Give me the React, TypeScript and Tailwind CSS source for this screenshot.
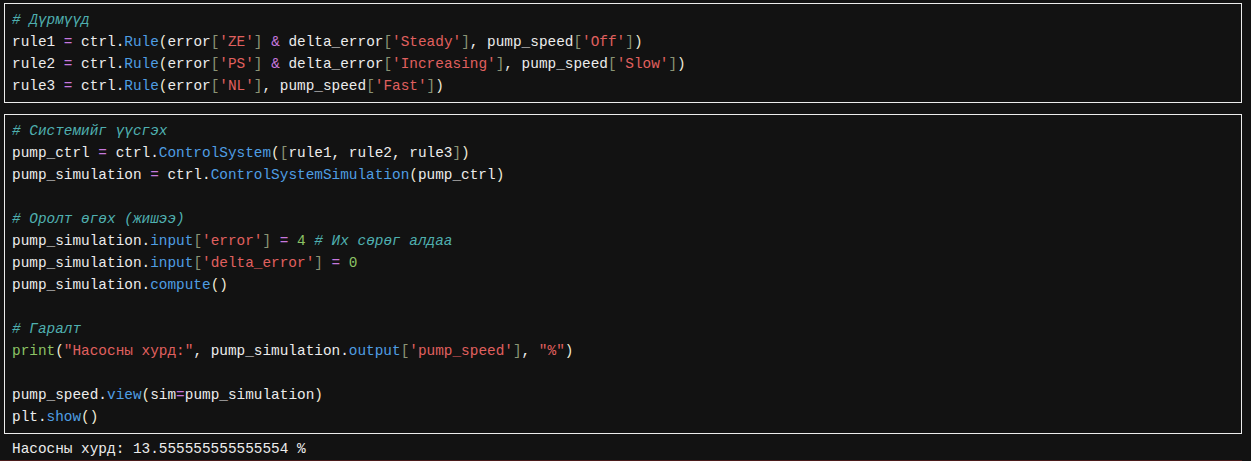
import React from "react"

type Tok = [string, string]

const c = {
  t: "text-[#ececec]",
  cm: "text-[#4fb0b0] italic",
  fn: "text-[#4f9ee3]",
  s: "text-[#e0605f]",
  op: "text-[#c678dd]",
  br: "text-[#8a9475]",
  pr: "text-[#f0ead6]",
  n: "text-[#8cc265]",
}

const T = (x: string): Tok => [c.t, x]
const S = (x: string): Tok => [c.s, x]
const F = (x: string): Tok => [c.fn, x]
const O = (x: string): Tok => [c.op, x]
const B = (x: string): Tok => [c.br, x]
const P = (x: string): Tok => [c.pr, x]
const N = (x: string): Tok => [c.n, x]
const C = (x: string): Tok => [c.cm, x]

const cell1: Tok[][] = [
  [C("# Дүрмүүд")],
  [T("rule1 "), O("="), T(" ctrl."), F("Rule"), P("("), T("error"), B("["), S("'ZE'"), B("]"), T(" "), O("&"), T(" delta_error"), B("["), S("'Steady'"), B("]"), T(", pump_speed"), B("["), S("'Off'"), B("]"), P(")")],
  [T("rule2 "), O("="), T(" ctrl."), F("Rule"), P("("), T("error"), B("["), S("'PS'"), B("]"), T(" "), O("&"), T(" delta_error"), B("["), S("'Increasing'"), B("]"), T(", pump_speed"), B("["), S("'Slow'"), B("]"), P(")")],
  [T("rule3 "), O("="), T(" ctrl."), F("Rule"), P("("), T("error"), B("["), S("'NL'"), B("]"), T(", pump_speed"), B("["), S("'Fast'"), B("]"), P(")")],
]

const cell2: Tok[][] = [
  [C("# Системийг үүсгэх")],
  [T("pump_ctrl "), O("="), T(" ctrl."), F("ControlSystem"), P("("), B("["), T("rule1, rule2, rule3"), B("]"), P(")")],
  [T("pump_simulation "), O("="), T(" ctrl."), F("ControlSystemSimulation"), P("("), T("pump_ctrl"), P(")")],
  [],
  [C("# Оролт өгөх (жишээ)")],
  [T("pump_simulation."), F("input"), B("["), S("'error'"), B("]"), T(" "), O("="), T(" "), N("4"), T(" "), C("# Их сөрөг алдаа")],
  [T("pump_simulation."), F("input"), B("["), S("'delta_error'"), B("]"), T(" "), O("="), T(" "), N("0")],
  [T("pump_simulation."), F("compute"), P("()")],
  [],
  [C("# Гаралт")],
  [N("print"), P("("), S("\"Насосны хурд:\""), T(", pump_simulation."), F("output"), B("["), S("'pump_speed'"), B("]"), T(", "), S("\"%\""), P(")")],
  [],
  [T("pump_speed."), F("view"), P("("), T("sim"), O("="), T("pump_simulation"), P(")")],
  [T("plt."), F("show"), P("()")],
]

function Cell({ lines }: { lines: Tok[][] }) {
  return (
    <div className="border border-[#ececec] bg-[#121212] px-[7px] py-[5px]">
      {lines.map((line, i) => (
        <div key={i} className="h-[22px] whitespace-pre leading-[22px]">
          {line.map(([cls, txt], j) => (
            <span key={j} className={cls}>
              {txt}
            </span>
          ))}
        </div>
      ))}
    </div>
  )
}

export default function App() {
  return (
    <div
      className="flex h-[461px] w-[1251px] flex-col overflow-hidden bg-[#121212] text-[14.4px]"
      style={{ fontFamily: "'Liberation Mono', 'DejaVu Sans Mono', monospace" }}
    >
      <div className="flex flex-col gap-[11px] pl-[4px] pr-[9px] pt-[3px]">
        <Cell lines={cell1} />
        <Cell lines={cell2} />
      </div>
      <div className="mt-[4px] h-[22px] whitespace-pre pl-[12px] leading-[22px] text-[#ececec]">
        Насосны хурд: 13.555555555555554 %
      </div>
      <div className="mt-auto mr-[9px] h-[2px] bg-[#4a1c1c]" />
    </div>
  )
}
